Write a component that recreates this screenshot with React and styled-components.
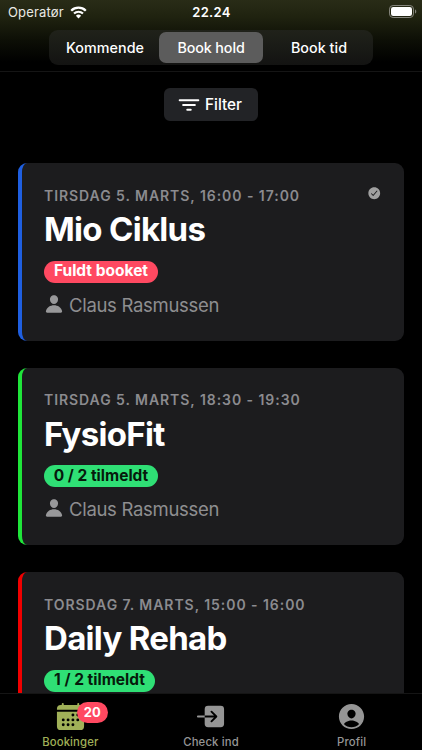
import React from "react";
import styled, { createGlobalStyle } from "styled-components";
import {
  IoCalendar,
  IoCheckmarkCircle,
  IoEnter,
  IoFilter,
  IoPerson,
  IoPersonCircle,
} from "react-icons/io5";

const tabs = [
  { label: "Kommende", spacing: "0.05px" },
  { label: "Book hold", spacing: "-0.1px", active: true },
  { label: "Book tid", spacing: "0.05px", shift: "4px" },
];

const classes = [
  {
    date: "Tirsdag 5. marts, 16:00 - 17:00",
    name: "Mio Ciklus",
    status: "Fuldt booket",
    full: true,
    checked: true,
    trainer: "Claus Rasmussen",
    color: "#1f5fe0",
    pillWidth: 114,
  },
  {
    date: "Tirsdag 5. marts, 18:30 - 19:30",
    name: "FysioFit",
    status: "0 / 2 tilmeldt",
    trainer: "Claus Rasmussen",
    color: "#1fe53a",
    pillWidth: 114,
  },
  {
    date: "Torsdag 7. marts, 15:00 - 16:00",
    name: "Daily Rehab",
    status: "1 / 2 tilmeldt",
    trainer: "Claus Rasmussen",
    color: "#f00000",
    pillWidth: 111,
  },
];

export default function App() {
  return (
    <Screen>
      <GlobalStyle />
      <Header>
        <StatusBar>
          <Carrier>
            <span>Operatør</span>
            <Wifi />
          </Carrier>
          <Clock>22.24</Clock>
          <Battery />
        </StatusBar>
        <Segments>
          {tabs.map((tab) => (
            <Segment
              key={tab.label}
              $active={tab.active}
              $spacing={tab.spacing}
              $shift={tab.shift}
            >
              {tab.label}
            </Segment>
          ))}
        </Segments>
      </Header>
      <Content>
        <FilterButton>
          <IoFilter />
          <span>Filter</span>
        </FilterButton>
        <List>
          {classes.map((item) => (
            <Card key={item.name} $color={item.color}>
              <CardTop>
                <DateText>{item.date}</DateText>
                {item.checked && <IoCheckmarkCircle />}
              </CardTop>
              <Title>{item.name}</Title>
              <Pill $full={item.full} $width={item.pillWidth}>
                {item.status}
              </Pill>
              <Trainer>
                <IoPerson />
                <span>{item.trainer}</span>
              </Trainer>
            </Card>
          ))}
        </List>
      </Content>
      <TabBar>
        <Tab $active>
          <IconWrap>
            <IoCalendar />
            <Badge>20</Badge>
          </IconWrap>
          <span>Bookinger</span>
        </Tab>
        <Tab>
          <IconWrap>
            <IoEnter />
          </IconWrap>
          <span>Check ind</span>
        </Tab>
        <Tab>
          <IconWrap>
            <IoPersonCircle />
          </IconWrap>
          <span>Profil</span>
        </Tab>
      </TabBar>
    </Screen>
  );
}

function Wifi() {
  return (
    <svg width="17" height="13" viewBox="0 0 17 13" fill="none">
      <path d="M1.2 4.7a10.4 10.4 0 0 1 14.6 0" stroke="#fff" strokeWidth="2.3" />
      <path d="M4 7.6a6.4 6.4 0 0 1 9 0" stroke="#fff" strokeWidth="2.1" />
      <path d="M8.5 12.4 5.9 9.7a3.7 3.7 0 0 1 5.2 0z" fill="#fff" />
    </svg>
  );
}

function Battery() {
  return (
    <svg width="28" height="13" viewBox="0 0 28 13" fill="none">
      <rect x="0.5" y="0.5" width="24" height="12" rx="3.6" stroke="#85857c" />
      <rect x="2" y="2" width="21" height="9" rx="2.2" fill="#fff" />
      <path d="M26 4.5c1.7.5 1.7 3.5 0 4z" fill="#85857c" />
    </svg>
  );
}

const GlobalStyle = createGlobalStyle`
  * {
    box-sizing: border-box;
  }
  body {
    margin: 0;
    background: #000;
    font-family: Inter, "Liberation Sans", sans-serif;
    overflow: hidden;
  }
  svg {
    display: block;
    flex-shrink: 0;
  }
`;

const Screen = styled.div`
  display: flex;
  flex-direction: column;
  width: 422px;
  height: 750px;
  background: #000;
  color: #fff;
  overflow: hidden;
  white-space: nowrap;
`;

const Header = styled.header`
  flex: none;
  height: 72px;
  border-bottom: 1px solid #151515;
  background: linear-gradient(#292c17 0, #202310 16px, #0d0f06 40px, #000 62px);
`;

const StatusBar = styled.div`
  display: grid;
  grid-template-columns: 1fr auto 1fr;
  align-items: center;
  height: 24px;
  padding: 0 5px 0 8px;
  > svg {
    justify-self: end;
    margin-top: -1px;
  }
`;

const Carrier = styled.div`
  display: flex;
  align-items: center;
  gap: 6px;
  font-size: 13px;
  letter-spacing: 0.15px;
  color: #e9e9e4;
`;

const Clock = styled.div`
  margin-right: 2px;
  font-size: 13px;
  font-weight: 600;
  letter-spacing: 0.3px;
`;

const Segments = styled.nav`
  display: grid;
  grid-template-columns: 108px 104px 108px;
  width: 324px;
  height: 35px;
  margin: 6px auto 0 49px;
  padding: 2px;
  border-radius: 9px;
  background: linear-gradient(#20221a, #131312);
`;

const Segment = styled.div`
  display: flex;
  align-items: center;
  justify-content: center;
  padding-left: ${(p) => p.$shift || 0};
  border-radius: 7px;
  font-size: 14.3px;
  font-weight: 450;
  letter-spacing: ${(p) => p.$spacing};
  background: ${(p) => (p.$active ? "#5c5c5c" : "transparent")};
`;

const Content = styled.main`
  flex: 1;
  min-height: 0;
  overflow: hidden;
  padding: 16px 18px 0;
`;

const FilterButton = styled.div`
  display: flex;
  align-items: center;
  justify-content: center;
  gap: 5px;
  width: 94px;
  height: 33px;
  margin: 0 auto;
  padding-right: 2px;
  border-radius: 6px;
  background: #222326;
  font-size: 15.3px;
  font-weight: 500;
  svg {
    width: 22px;
    height: 22px;
  }
`;

const List = styled.div`
  display: flex;
  flex-direction: column;
  gap: 27px;
  margin-top: 42px;
`;

const Card = styled.article`
  flex: none;
  height: 177.5px;
  padding: 23.5px 23px 0 22px;
  border-left: 4px solid ${(p) => p.$color};
  border-radius: 9px;
  background: #1c1c1e;
`;

const CardTop = styled.div`
  display: flex;
  justify-content: space-between;
  height: 18px;
  color: #8b8b8f;
  svg {
    width: 14.5px;
    height: 14.5px;
    margin-top: -1px;
    color: #a0a0a0;
  }
`;

const DateText = styled.div`
  font-size: 14px;
  line-height: 17px;
  font-weight: 600;
  letter-spacing: 0.94px;
  text-transform: uppercase;
`;

const Title = styled.h2`
  margin: 4.5px 0 0;
  font-size: 33px;
  line-height: 40px;
  font-weight: 700;
  letter-spacing: -0.7px;
`;

const Pill = styled.div`
  display: flex;
  align-items: center;
  justify-content: center;
  width: ${(p) => p.$width}px;
  height: 22px;
  margin-top: 11.5px;
  border-radius: 11px;
  font-size: 15.5px;
  line-height: 20px;
  font-weight: 650;
  padding-bottom: 1px;
  color: ${(p) => (p.$full ? "#fff" : "#061a0c")};
  background: ${(p) => (p.$full ? "#ff4961" : "#2fdf75")};
`;

const Trainer = styled.div`
  display: flex;
  align-items: center;
  gap: 5px;
  margin-top: 10px;
  font-size: 18.5px;
  line-height: 24px;
  letter-spacing: -0.3px;
  color: #8e8e90;
  svg {
    width: 20px;
    height: 20px;
    margin-top: -2px;
    color: #98989a;
  }
`;

const TabBar = styled.footer`
  display: grid;
  grid-template-columns: repeat(3, 1fr);
  flex: none;
  height: 57px;
  border-top: 1px solid #151515;
  background: #000;
`;

const Tab = styled.div`
  display: flex;
  flex-direction: column;
  align-items: center;
  padding-top: 7px;
  font-size: 11.3px;
  line-height: 14px;
  font-weight: 500;
  letter-spacing: 0.15px;
  color: ${(p) => (p.$active ? "#a0b058" : "#959595")};
`;

const IconWrap = styled.div`
  position: relative;
  margin-bottom: 3px;
  svg {
    width: 31px;
    height: 31px;
  }
`;

const Badge = styled.span`
  position: absolute;
  left: 22px;
  top: 1px;
  width: 31px;
  height: 21px;
  border-radius: 11px;
  background: #ff4961;
  color: #fff;
  font-size: 13px;
  line-height: 20px;
  font-weight: 700;
  text-align: center;
`;
